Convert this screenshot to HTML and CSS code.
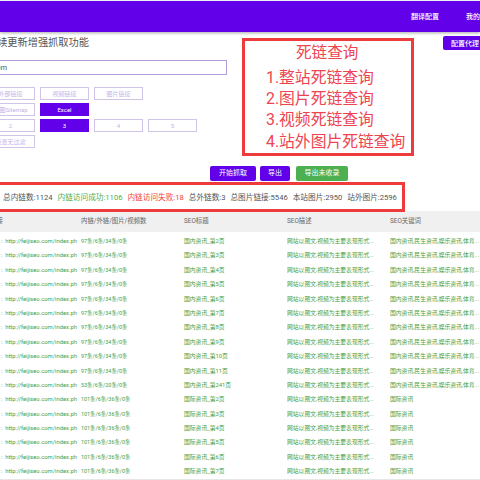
FILE: index.html
```html
<!DOCTYPE html>
<html lang="zh">
<head>
<meta charset="utf-8">
<title>死链查询</title>
<link rel="stylesheet" href="styles.css">
</head>
<body>
<header class="topbar">
  <span class="nav-item">翻译配置</span>
  <span class="nav-item nav-last">我的工具</span>
</header>
<main class="page">
  <section class="form-area">
    <div class="form-left">
      <h1 class="title">继续更新增强抓取功能</h1>
      <div class="url-input">https://feijiseo.com</div>
      <div class="options">
        <span class="opt">外部链接</span><span class="opt">视频链接</span><span class="opt">图片链接</span><span></span>
        <span class="opt">地图Sitemap</span><span class="opt on">Excel</span><span></span><span></span>
        <span class="opt">2</span><span class="opt on">3</span><span class="opt">4</span><span class="opt">5</span>
        <span class="opt">设置无过滤</span>
      </div>
    </div>
    <button class="proxy">配置代理</button>
  </section>
  <div class="actions">
    <span class="btn">开始抓取</span>
    <span class="btn">导出</span>
    <span class="btn green">导出未收录</span>
  </div>
  <div class="stats">
    <span>总内链数:1124</span>
    <span class="ok">内链访问成功:1106</span>
    <span class="bad">内链访问失败:18</span>
    <span>总外链数:3</span>
    <span>总图片链接:5546</span>
    <span>本站图片:2950</span>
    <span>站外图片:2596</span>
  </div>
  <div class="table" id="table">
    <div class="row head">
      <span>链接</span><span>内链/外链/图片/视频数</span><span>SEO标题</span><span>SEO描述</span><span>SEO关键词</span>
    </div>
    <div class="row"><span>:&nbsp;&nbsp;http://feijiseo.com/index.ph</span><span>97条/6条/34条/0条</span><span>国内资讯_第2页</span><span>网站以图文,视频为主要表现形式...</span><span>国内资讯,民生资讯,娱乐资讯,体育...</span></div>
    <div class="row"><span>:&nbsp;&nbsp;http://feijiseo.com/index.ph</span><span>97条/6条/34条/0条</span><span>国内资讯_第3页</span><span>网站以图文,视频为主要表现形式...</span><span>国内资讯,民生资讯,娱乐资讯,体育...</span></div>
    <div class="row"><span>:&nbsp;&nbsp;http://feijiseo.com/index.ph</span><span>97条/6条/34条/0条</span><span>国内资讯_第4页</span><span>网站以图文,视频为主要表现形式...</span><span>国内资讯,民生资讯,娱乐资讯,体育...</span></div>
    <div class="row"><span>:&nbsp;&nbsp;http://feijiseo.com/index.ph</span><span>97条/6条/34条/0条</span><span>国内资讯_第5页</span><span>网站以图文,视频为主要表现形式...</span><span>国内资讯,民生资讯,娱乐资讯,体育...</span></div>
    <div class="row"><span>:&nbsp;&nbsp;http://feijiseo.com/index.ph</span><span>97条/6条/34条/0条</span><span>国内资讯_第6页</span><span>网站以图文,视频为主要表现形式...</span><span>国内资讯,民生资讯,娱乐资讯,体育...</span></div>
    <div class="row"><span>:&nbsp;&nbsp;http://feijiseo.com/index.ph</span><span>97条/6条/34条/0条</span><span>国内资讯_第7页</span><span>网站以图文,视频为主要表现形式...</span><span>国内资讯,民生资讯,娱乐资讯,体育...</span></div>
    <div class="row"><span>:&nbsp;&nbsp;http://feijiseo.com/index.ph</span><span>97条/6条/34条/0条</span><span>国内资讯_第8页</span><span>网站以图文,视频为主要表现形式...</span><span>国内资讯,民生资讯,娱乐资讯,体育...</span></div>
    <div class="row"><span>:&nbsp;&nbsp;http://feijiseo.com/index.ph</span><span>97条/6条/34条/0条</span><span>国内资讯_第9页</span><span>网站以图文,视频为主要表现形式...</span><span>国内资讯,民生资讯,娱乐资讯,体育...</span></div>
    <div class="row"><span>:&nbsp;&nbsp;http://feijiseo.com/index.ph</span><span>97条/6条/34条/0条</span><span>国内资讯_第10页</span><span>网站以图文,视频为主要表现形式...</span><span>国内资讯,民生资讯,娱乐资讯,体育...</span></div>
    <div class="row"><span>:&nbsp;&nbsp;http://feijiseo.com/index.ph</span><span>97条/6条/34条/0条</span><span>国内资讯_第11页</span><span>网站以图文,视频为主要表现形式...</span><span>国内资讯,民生资讯,娱乐资讯,体育...</span></div>
    <div class="row"><span>:&nbsp;&nbsp;http://feijiseo.com/index.ph</span><span>53条/6条/20条/0条</span><span>国内资讯_第241页</span><span>网站以图文,视频为主要表现形式...</span><span>国内资讯,民生资讯,娱乐资讯,体育...</span></div>
    <div class="row"><span>:&nbsp;&nbsp;http://feijiseo.com/index.ph</span><span>101条/6条/36条/0条</span><span>国际资讯_第2页</span><span>网站以图文,视频为主要表现形式...</span><span>国际资讯</span></div>
    <div class="row"><span>:&nbsp;&nbsp;http://feijiseo.com/index.ph</span><span>101条/6条/36条/0条</span><span>国际资讯_第3页</span><span>网站以图文,视频为主要表现形式...</span><span>国际资讯</span></div>
    <div class="row"><span>:&nbsp;&nbsp;http://feijiseo.com/index.ph</span><span>101条/6条/36条/0条</span><span>国际资讯_第4页</span><span>网站以图文,视频为主要表现形式...</span><span>国际资讯</span></div>
    <div class="row"><span>:&nbsp;&nbsp;http://feijiseo.com/index.ph</span><span>101条/6条/36条/0条</span><span>国际资讯_第5页</span><span>网站以图文,视频为主要表现形式...</span><span>国际资讯</span></div>
    <div class="row"><span>:&nbsp;&nbsp;http://feijiseo.com/index.ph</span><span>101条/6条/36条/0条</span><span>国际资讯_第6页</span><span>网站以图文,视频为主要表现形式...</span><span>国际资讯</span></div>
    <div class="row"><span>:&nbsp;&nbsp;http://feijiseo.com/index.ph</span><span>101条/6条/36条/0条</span><span>国际资讯_第7页</span><span>网站以图文,视频为主要表现形式...</span><span>国际资讯</span></div>
  </div>
</main>
<aside class="note">
  <div class="note-title">死链查询</div>
  <ol class="note-list">
    <li>1.整站死链查询</li>
    <li>2.图片死链查询</li>
    <li>3.视频死链查询</li>
    <li>4.站外图片死链查询</li>
  </ol>
</aside>
<div class="stats-frame"></div>
</body>
</html>
```
FILE: styles.css
```css
* { box-sizing: border-box; }
html, body { margin: 0; padding: 0; height: 480px; overflow: hidden; background: #fff; }
body { position: relative; width: 480px; font-family: Roboto, "Noto Sans CJK SC", sans-serif; color: #555; }
.topbar { margin-top: 1px; height: 31px; background: #6200ea; box-shadow: 0 1px 3px rgba(0,0,0,.35); display: flex; justify-content: flex-end; align-items: center; color: #fff; font-size: 7px; font-weight: 500; overflow: hidden; padding-bottom: 1px; }
.nav-item { margin-left: 27px; white-space: nowrap; }
.nav-last { margin-right: -14px; }
.page { margin-left: -14px; width: 494px; }
.form-area { display: flex; justify-content: space-between; height: 134px; }
.form-left { width: 241px; }
.title { margin: 0 0 0 1px; padding: 4px 0 0 0; font-size: 10.2px; line-height: 14px; font-weight: 400; color: #555; white-space: nowrap; height: 28px; }
.url-input { height: 15px; border: 1px solid #b39ddb; font-size: 7.5px; line-height: 13px; color: #555; overflow: hidden; direction: rtl; padding-right: 219px; }
.options { display: grid; grid-template-columns: repeat(4, 49px); gap: 3px 5px; margin-top: 12px; }
.opt { height: 13px; border: 1px solid #d1c4e9; color: #c5b3e6; font-size: 6px; line-height: 11px; text-align: center; white-space: nowrap; overflow: hidden; }
.opt.on { background: #6200ea; border-color: #6200ea; color: #fff; }
.proxy { margin: 4px -7px 0 0; width: 44px; height: 14px; border: 0; border-radius: 2px; background: #6200ea; color: #fff; font: 500 7px Roboto, "Noto Sans CJK SC", sans-serif; padding: 0; align-self: flex-start; }
.actions { display: flex; margin-left: 224px; gap: 4px; height: 15px; }
.btn { height: 15px; line-height: 15px; border-radius: 2px; background: #6200ea; color: #fff; font-size: 7px; text-align: center; width: 46px; }
.btn:nth-child(2) { width: 30px; }
.btn.green { background: #4caf50; width: 52px; margin-left: 2px; }
.stats { height: 29px; margin-top: 1px; padding-left: 17px; display: flex; align-items: center; gap: 5px; font-size: 7.65px; white-space: nowrap; color: #555; }
.ok { color: #4caf50; }
.bad { color: #f44336; }
.table { border-bottom: 1px solid #e6e6e6; }
.row { display: grid; grid-template-columns: 95px 103px 103px 103px 90px; height: 14.4px; line-height: 14.4px; font-size: 5.8px; color: #43a047; white-space: nowrap; }
.row span { overflow: hidden; }
.row span:first-child { padding: 0 5px 0 15px; }
.row span:nth-child(2) { font-size: 5.4px; }
.head { height: 21px; line-height: 21px; background: #f0f0f0; color: #666; margin-bottom: 2px; font-size: 6.4px; }
.head span:first-child { padding-left: 4px; }
.row.head span:nth-child(2) { font-size: 6.4px; }
.note { position: absolute; left: 242px; top: 38px; width: 172px; height: 118px; border: 3px solid #ee3b3b; color: #ee4450; padding: 2px 0 0 21px; }
.note-title { font-size: 15.6px; line-height: 20px; margin-left: 30px; }
.note-list { list-style: none; margin: 4px 0 0; padding: 0; font-size: 15.8px; line-height: 21.2px; white-space: nowrap; }
.stats-frame { position: absolute; left: -4px; top: 182px; width: 409px; height: 30px; border: 3px solid #ee3b3b; }
```
